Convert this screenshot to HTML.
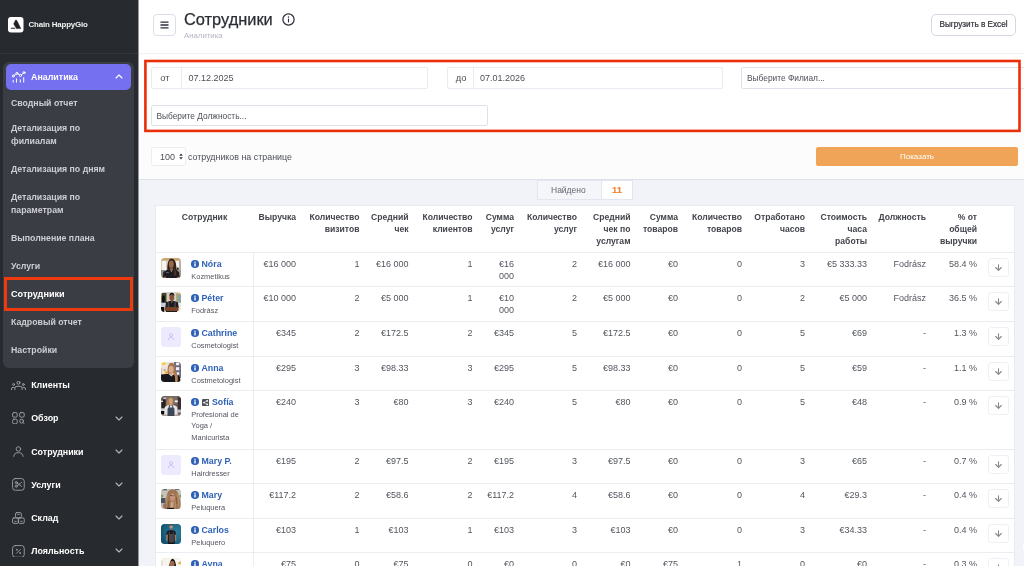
<!DOCTYPE html>
<html><head><meta charset="utf-8"><style>
*{box-sizing:border-box;margin:0;padding:0}
svg{display:block}
html,body{width:1024px;height:566px;overflow:hidden;background:#fff;font-family:"Liberation Sans",sans-serif;color:#3f4254}
#side{will-change:transform;position:absolute;left:0;top:0;width:138px;height:566px;background:#272a2e;color:#fff;overflow:hidden}
#brand{position:absolute;left:0;top:0;width:138px;height:54px;border-bottom:1px solid #33363b}
#logo{position:absolute;left:8.2px;top:17px;width:15.5px;height:15.5px;background:#fff;border-radius:3px}
#bname{position:absolute;left:28.5px;top:19.5px;font-size:7.9px;font-weight:bold;color:#f2f2f2;letter-spacing:-0.15px}
#grp{position:absolute;left:3px;top:62px;width:130.5px;height:305.5px;background:#3a3d44;border-radius:6px}
#pill{position:absolute;left:3px;top:2px;width:125px;height:26px;background:#7470ef;border-radius:5px}
#pill span{position:absolute;left:25px;top:7.5px;font-size:8.9px;font-weight:bold;color:#fff}
.sub{position:absolute;left:8px;font-size:8.75px;font-weight:bold;color:#cdced3;line-height:13px;white-space:nowrap}
.sub.act{color:#fff;font-size:9.1px}
#actbox{position:absolute;left:4px;top:277px;width:129.4px;height:33.6px;border:3px solid #ee3a0c}
.mi{position:absolute;left:31.2px;font-size:8.9px;font-weight:bold;color:#fff;white-space:nowrap}
.ico{position:absolute}
#main{will-change:transform;position:absolute;left:138px;top:0;width:886px;height:566px;background:#f2f3f8;overflow:hidden;border-left:1px solid #95979d}
#main>*{margin-left:-1px}
#hdr{position:absolute;left:0;top:0;width:886px;height:54px;background:#fff;border-bottom:1px solid #f1f1f5}
#ham{position:absolute;left:15px;top:14px;width:23px;height:22px;border:1px solid #dcdfe9;border-radius:4px;background:#fff}
#title{position:absolute;left:46px;top:9.5px;font-size:16.4px;color:#2a2d34;-webkit-text-stroke:0.25px #2a2d34;white-space:nowrap}
#crumb{position:absolute;left:46px;top:31px;font-size:7.8px;color:#b5b5c3}
#xl{position:absolute;left:793px;top:13.5px;width:85px;height:22px;border:1px solid #d3d7e3;border-radius:5px;background:#fff;font-size:8.2px;color:#2f3137;-webkit-text-stroke:0.2px #2f3137;text-align:center;line-height:20px}
#filt{position:absolute;left:0;top:54px;width:886px;height:126px;background:linear-gradient(#fff 0,#fff 79px,#fcfcfd 79px);border-bottom:1px solid #dfe1e8}
#red{position:absolute;left:6px;top:6px;width:876px;height:73px;border:3px solid #ea2e08}
.inp{position:absolute;height:21.6px;border:1px solid #e8ebf2;border-radius:2px;background:#fff;font-size:9px;color:#4d5058;line-height:21px;white-space:nowrap}
.add{position:absolute;top:0;left:0;height:19.6px;border-right:1px solid #e8ebf2;text-align:left;padding-left:7.8px;font-size:9.3px}
#show{position:absolute;left:678px;top:93px;width:202px;height:19px;background:#f0a458;border-radius:2px;color:#fff;font-size:8px;text-align:center;line-height:19px}
#found{position:absolute;left:399px;top:180px;width:96px;height:20px;border:1px solid #e4e6ef;background:#f5f6fa;font-size:8.5px;line-height:18px;color:#63666f}
#found b{position:absolute;left:63px;top:0;width:31px;height:18px;background:#fff;border-left:1px solid #e4e6ef;text-align:center;color:#f08a3c;font-size:9.3px;font-weight:bold;-webkit-text-stroke:0.2px #f08a3c}
#tbl{position:absolute;left:17px;top:205px;width:860px;height:400px;background:#fff;border:1px solid #e9ebf1}
.row{position:absolute;left:0;width:858px;border-top:1px solid #ebedf3}
.c{position:absolute;text-align:right;font-size:9px;line-height:11.6px;color:#53565f;white-space:nowrap}
.h{position:absolute;text-align:right;font-size:8.6px;line-height:11.9px;font-weight:bold;color:#43454d;white-space:nowrap}
.vl{position:absolute;left:97px;width:1px;background:#ebedf3}
.nm{position:absolute;left:45.5px;font-size:8.8px;font-weight:bold;color:#2f62b5;white-space:nowrap}
.rl{position:absolute;left:35.3px;font-size:7.45px;line-height:11.7px;color:#53565f;white-space:nowrap}
.av{position:absolute;left:5px;width:20px;height:20px;border-radius:3.5px;overflow:hidden}
.btn{position:absolute;left:832px;width:21px;height:19px;border:1px solid #eef0f4;border-radius:3px;background:#fff}
.inf{position:absolute;left:35.3px;width:7.5px;height:7.5px;border-radius:50%;background:#2f62b5}
</style></head><body>
<div id="side">
 <div id="brand"><div id="logo" style="background:none"><svg width="15.5" height="15.5" viewBox="0 0 15.5 15.5" ><rect width="15.5" height="15.5" rx="3" fill="#fff"/><path d="M7.6 3 L8.7 3.3 L12.8 11.6 L8.5 11.6 L5.7 6.9Z" fill="#202126" stroke="#202126" stroke-width="0.5" stroke-linejoin="round"/><rect x="2.8" y="10.8" width="4.4" height="0.9" rx="0.3" fill="#202126"/></svg></div><div id="bname">Chain HappyGio</div></div>
 <div id="grp">
  <div id="pill"><div class="ico" style="left:6px;top:7px"><svg width="14" height="12" viewBox="0 0 14 12" ><g stroke="#fff" stroke-width="1" fill="none" stroke-linecap="round"><path d="M1.2 9.3 V11.2 M4.5 7.9 V11.2 M8.3 8.8 V11.2 M11.7 6.6 V11.2"/><circle cx="1.3" cy="5" r="1.05"/><circle cx="4.9" cy="2.4" r="1.05"/><circle cx="8.5" cy="4.5" r="1.05"/><circle cx="12" cy="1.7" r="1.05"/><path d="M2.2 4.4 L4 3.1 M5.9 2.9 L7.6 3.9 M9.3 3.8 L11.2 2.3" stroke-width="0.9"/></g></svg></div><span>Аналитика</span><div class="ico" style="left:109px;top:10px"><svg width="8" height="5" viewBox="0 0 8 5" ><path d="M1 4 L4 1 L7 4" fill="none" stroke="#fff" stroke-width="1.1" stroke-linecap="round" stroke-linejoin="round"/></svg></div></div>
  <div class="sub" style="top:34.5px">Сводный отчет</div><div class="sub" style="top:60px">Детализация по<br>филиалам</div><div class="sub" style="top:101px">Детализация по дням</div><div class="sub" style="top:128.5px">Детализация по<br>параметрам</div><div class="sub" style="top:170px">Выполнение плана</div><div class="sub" style="top:198px">Услуги</div><div class="sub act" style="top:225.7px">Сотрудники</div><div class="sub" style="top:254px">Кадровый отчет</div><div class="sub" style="top:282px">Настройки</div>
 </div>
 <div id="actbox"></div>
 <div class="ico" style="left:11px;top:381px"><svg width="15" height="9.6" viewBox="0 0 15 9.6" ><g stroke="#a4a6ad" stroke-width="0.95" fill="none" stroke-linecap="round" stroke-linejoin="round"><circle cx="7.5" cy="1.7" r="1.5"/><path d="M3.9 8.6 V7.3 Q3.9 5.3 5.9 5.3 H9.1 Q11.1 5.3 11.1 7.3 V8.6"/><circle cx="2.6" cy="3.5" r="0.95"/><path d="M0.5 8.6 V8 Q0.5 6.4 2.1 6.4 H3.1"/><circle cx="12.4" cy="3.5" r="0.95"/><path d="M14.5 8.6 V8 Q14.5 6.4 12.9 6.4 H11.9"/></g></svg></div><div class="mi" style="top:380px">Клиенты</div><div class="ico" style="left:12px;top:412px"><svg width="13.4" height="12.4" viewBox="0 0 14 13" ><g stroke="#a4a6ad" stroke-width="0.95" fill="none" stroke-linecap="round" stroke-linejoin="round"><rect x="0.6" y="0.6" width="4.8" height="4.8" rx="1.4"/><rect x="8" y="0.6" width="4.8" height="4.8" rx="1.4"/><rect x="0.6" y="7.6" width="4.8" height="4.8" rx="1.4"/><circle cx="10" cy="9.6" r="2"/><path d="M11.6 11.2 L13 12.5"/></g></svg></div><div class="mi" style="top:413.3px">Обзор</div><div class="ico" style="left:115px;top:415.8px"><svg width="8" height="5" viewBox="0 0 8 5" ><path d="M1 1 L4 4 L7 1" fill="none" stroke="#b4b6bd" stroke-width="1.1" stroke-linecap="round" stroke-linejoin="round"/></svg></div><div class="ico" style="left:13.2px;top:445.8px"><svg width="10.8" height="11" viewBox="0 0 12 12" ><g stroke="#a4a6ad" stroke-width="0.95" fill="none" stroke-linecap="round" stroke-linejoin="round"><circle cx="6" cy="3.2" r="2.5"/><path d="M0.8 11.5 Q1 7.3 6 7.3 Q11 7.3 11.2 11.5"/></g></svg></div><div class="mi" style="top:446.5px">Сотрудники</div><div class="ico" style="left:115px;top:449.0px"><svg width="8" height="5" viewBox="0 0 8 5" ><path d="M1 1 L4 4 L7 1" fill="none" stroke="#b4b6bd" stroke-width="1.1" stroke-linecap="round" stroke-linejoin="round"/></svg></div><div class="ico" style="left:12px;top:478.3px"><svg width="12.8" height="12.8" viewBox="0 0 14 14" ><g stroke="#a4a6ad" stroke-width="0.95" fill="none" stroke-linecap="round" stroke-linejoin="round"><rect x="0.6" y="0.6" width="12.8" height="12.8" rx="3"/><circle cx="4.7" cy="5" r="1.2"/><circle cx="4.7" cy="9" r="1.2"/><path d="M5.7 5.6 L10.5 9.2 M5.7 8.4 L10.5 4.8"/></g></svg></div><div class="mi" style="top:479.5px">Услуги</div><div class="ico" style="left:115px;top:482.0px"><svg width="8" height="5" viewBox="0 0 8 5" ><path d="M1 1 L4 4 L7 1" fill="none" stroke="#b4b6bd" stroke-width="1.1" stroke-linecap="round" stroke-linejoin="round"/></svg></div><div class="ico" style="left:12px;top:511.5px"><svg width="12.8" height="12" viewBox="0 0 14 13" ><g stroke="#a4a6ad" stroke-width="0.95" fill="none" stroke-linecap="round" stroke-linejoin="round"><rect x="3.8" y="0.6" width="6.4" height="5.8" rx="1.4"/><rect x="0.6" y="6.4" width="6.4" height="6" rx="1.4"/><rect x="7" y="6.4" width="6.4" height="6" rx="1.4"/><path d="M6.2 2.6 H7.8 M3 10.2 H4.6 M9.4 10.2 H11"/></g></svg></div><div class="mi" style="top:512.5px">Склад</div><div class="ico" style="left:115px;top:515.0px"><svg width="8" height="5" viewBox="0 0 8 5" ><path d="M1 1 L4 4 L7 1" fill="none" stroke="#b4b6bd" stroke-width="1.1" stroke-linecap="round" stroke-linejoin="round"/></svg></div><div class="ico" style="left:12px;top:544.5px"><svg width="12.8" height="12.8" viewBox="0 0 14 14" ><g stroke="#a4a6ad" stroke-width="0.95" fill="none" stroke-linecap="round" stroke-linejoin="round"><rect x="0.6" y="0.6" width="12.8" height="12.8" rx="3"/><path d="M5 9 L9 5"/><circle cx="5.2" cy="5.2" r="0.5"/><circle cx="8.8" cy="8.8" r="0.5"/></g></svg></div><div class="mi" style="top:545.5px">Лояльность</div><div class="ico" style="left:115px;top:548.0px"><svg width="8" height="5" viewBox="0 0 8 5" ><path d="M1 1 L4 4 L7 1" fill="none" stroke="#b4b6bd" stroke-width="1.1" stroke-linecap="round" stroke-linejoin="round"/></svg></div>
</div>
<div id="main">
 <div id="hdr">
  <div id="ham"><div class="ico" style="left:6px;top:6px"><svg width="9" height="8" viewBox="0 0 9 8" ><path d="M0.5 1.2 H8.5 M0.5 4 H8.5 M0.5 6.8 H8.5" stroke="#2b2e3b" stroke-width="1.3"/></svg></div></div>
  <div id="title">Сотрудники</div>
  <div class="ico" style="left:144px;top:12.8px"><svg width="13" height="13" viewBox="0 0 13 13" ><circle cx="6.5" cy="6.5" r="5.6" fill="none" stroke="#2b2e3b" stroke-width="1.25"/><circle cx="6.5" cy="4" r="0.75" fill="#2b2e3b"/><rect x="5.95" y="5.6" width="1.1" height="3.8" fill="#2b2e3b"/></svg></div>
  <div id="crumb">Аналитика</div>
  <div id="xl">Выгрузить в Excel</div>
 </div>
 <div id="filt">
  <div class="inp" style="left:13.4px;top:13.2px;width:276.6px"><div class="add" style="width:30px">от</div><span style="margin-left:36px">07.12.2025</span></div>
  <div class="inp" style="left:309px;top:13px;width:276px"><div class="add" style="width:26px">до</div><span style="margin-left:32px">07.01.2026</span></div>
  <div class="inp" style="left:603px;top:13.2px;width:300px;font-size:8.35px;padding-left:5px;border-color:#dde2ea">Выберите Филиал...</div>
  <div class="inp" style="left:13.4px;top:51.3px;width:336.6px;height:21px;font-size:8.35px;padding-left:4px;border-color:#dde2ea">Выберите Должность...</div>
  <div class="inp" style="left:13.4px;top:93.3px;width:34.4px;height:19px;line-height:18.6px;padding-left:7.6px;border-color:#eceef3">100<svg width="4" height="7" viewBox="0 0 4 7" style="position:absolute;left:26.6px;top:5.2px"><path d="M0.2 2.8 L2 0.4 L3.8 2.8Z M0.2 4.2 L2 6.6 L3.8 4.2Z" fill="#33363d"/></svg></div>
  <div style="position:absolute;left:50px;top:97.5px;font-size:8.9px;white-space:nowrap;color:#4d5058">сотрудников на странице</div>
  <div id="show">Показать</div>
  <svg width="886" height="90" style="position:absolute;left:0;top:0"><rect x="7.4" y="7.0" width="874.1" height="69.9" fill="none" stroke="#ea2e08" stroke-width="2.6"/></svg>
 </div>
 <div id="found"><span style="margin-left:13px">Найдено</span><b>11</b></div>
 <div id="tbl"><div class="h" style="left:0;width:97px;top:6.1px;text-align:center">Сотрудник</div>
<div class="h" style="right:718.0px;top:6.1px">Выручка</div>
<div class="h" style="right:654.5px;top:6.1px">Количество<br>визитов</div>
<div class="h" style="right:605.5px;top:6.1px">Средний<br>чек</div>
<div class="h" style="right:541.5px;top:6.1px">Количество<br>клиентов</div>
<div class="h" style="right:500.0px;top:6.1px">Сумма<br>услуг</div>
<div class="h" style="right:437.0px;top:6.1px">Количество<br>услуг</div>
<div class="h" style="right:383.5px;top:6.1px">Средний<br>чек по<br>услугам</div>
<div class="h" style="right:336.0px;top:6.1px">Сумма<br>товаров</div>
<div class="h" style="right:272.0px;top:6.1px">Количество<br>товаров</div>
<div class="h" style="right:209.0px;top:6.1px">Отработано<br>часов</div>
<div class="h" style="right:147.0px;top:6.1px">Стоимость<br>часа<br>работы</div>
<div class="h" style="right:88.0px;top:6.1px">Должность</div>
<div class="h" style="right:37.0px;top:6.1px">% от<br>общей<br>выручки</div>
<div class="row" style="top:46px;height:34px"><div class="vl" style="top:0;height:34px"></div><div class="av" style="top:5px"><svg width="20" height="20" viewBox="0 0 20 20" ><defs><filter id="b1" x="-15%" y="-15%" width="130%" height="130%"><feGaussianBlur stdDeviation="0.65"/></filter></defs><g filter="url(#b1)"><rect x="-2" y="-2" width="24" height="24" fill="#d8cdbf"/><rect x="-2" y="-2" width="24" height="4.5" fill="#c7a673"/><rect x="1" y="3" width="4" height="9.5" fill="#f7f3ed"/><rect x="14.5" y="3" width="4" height="7.5" fill="#f3efe9"/><rect x="18" y="3" width="4" height="10" fill="#b9b2a8"/><ellipse cx="16.8" cy="10.8" rx="1" ry="1.6" fill="#3a302c"/><rect x="-2" y="12" width="6" height="10" fill="#8d8983"/><rect x="16" y="12" width="6" height="10" fill="#9a958e"/><path d="M6.3 13 Q5.8 1 10.4 0.4 Q15 1 15.2 8 Q16.4 13 15.6 17 L12 17 L12 11 L7 12Z" fill="#33241d"/><ellipse cx="10.3" cy="6.2" rx="2.4" ry="3.6" fill="#9a694b"/><rect x="9.2" y="9" width="2.4" height="4" fill="#8c5c40"/><path d="M1.6 20.5 L2.4 14 Q5 12 8.6 11.3 L10.4 14 L12.2 11.3 Q15.6 12 18 14 L18.8 20.5Z" fill="#1b1c23"/><path d="M12.6 10 Q16 13 15.4 17.5 L13.2 17.5 Q13.6 13 12.6 10Z" fill="#4e362a"/><rect x="5" y="14" width="3" height="0.8" fill="#6d6e76"/><rect x="2.5" y="18.8" width="2.6" height="2" fill="#a8623c"/><rect x="15.8" y="18.8" width="2.4" height="2" fill="#a8623c"/></g></svg></div><div class="inf" style="top:7.3px"><svg width="8" height="8" viewBox="0 0 8 8" style="position:absolute;left:0;top:0"><circle cx="4" cy="2.2" r="0.75" fill="#fff"/><rect x="3.3" y="3.4" width="1.4" height="3" fill="#fff"/></svg></div><div class="nm" style="top:6px">Nóra</div><div class="rl" style="top:17.7px">Kozmetikus</div><div class="c" style="right:718.0px;top:6px">€16 000</div><div class="c" style="right:654.5px;top:6px">1</div><div class="c" style="right:605.5px;top:6px">€16 000</div><div class="c" style="right:541.5px;top:6px">1</div><div class="c" style="right:500.0px;top:6px">€16<br>000</div><div class="c" style="right:437.0px;top:6px">2</div><div class="c" style="right:383.5px;top:6px">€16 000</div><div class="c" style="right:336.0px;top:6px">€0</div><div class="c" style="right:272.0px;top:6px">0</div><div class="c" style="right:209.0px;top:6px">3</div><div class="c" style="right:147.0px;top:6px">€5 333.33</div><div class="c" style="right:88.0px;top:6px">Fodrász</div><div class="c" style="right:37.0px;top:6px">58.4 %</div><div class="btn" style="top:4.5px"><div style="position:absolute;left:5px;top:4px;width:9px;height:9px"><svg width="9" height="9" viewBox="0 0 9 9" ><path d="M4.5 1.8 V7.2 M1.7 4.5 L4.5 7.3 L7.3 4.5" fill="none" stroke="#85878e" stroke-width="1.1" stroke-linecap="round" stroke-linejoin="round"/></svg></div></div></div>
<div class="row" style="top:80px;height:35px"><div class="vl" style="top:0;height:35px"></div><div class="av" style="top:5px"><svg width="20" height="20" viewBox="0 0 20 20" ><defs><filter id="b2" x="-15%" y="-15%" width="130%" height="130%"><feGaussianBlur stdDeviation="0.65"/></filter></defs><g filter="url(#b2)"><rect x="-2" y="-2" width="24" height="24" fill="#d6d0c8"/><rect x="0.3" y="1" width="5.4" height="10" fill="#3a4541"/><rect x="0.2" y="1" width="0.7" height="8" fill="#b08a4f"/><rect x="5.2" y="1" width="0.8" height="8" fill="#b89558"/><ellipse cx="2.4" cy="7" rx="1.5" ry="3.4" fill="#101010"/><rect x="15.5" y="2" width="5" height="8.5" fill="#86a5a5"/><rect x="15.2" y="1.6" width="1.1" height="9" fill="#c8a25e"/><rect x="15.2" y="1.4" width="6" height="1" fill="#c8a25e"/><rect x="-2" y="10.8" width="6" height="4.4" fill="#c9cdd9"/><rect x="-2" y="15" width="5.2" height="7" fill="#0d0d0e"/><rect x="16.5" y="11" width="5" height="10" fill="#efe9e2"/><ellipse cx="10.8" cy="5.6" rx="2.4" ry="3.3" fill="#875436"/><path d="M8.3 4.2 Q8.4 0.8 10.8 0.8 Q13.3 0.8 13.4 4.2 Q12.6 2.6 10.8 2.6 Q9 2.6 8.3 4.2Z" fill="#191311"/><rect x="9.8" y="8" width="2" height="3" fill="#7a4a2e"/><path d="M4.2 16 L5 10.6 Q7.4 9 9.6 8.7 L10.8 11.4 L12 8.7 Q14.6 9 17 10.6 L17.8 16Z" fill="#1c1c20"/><path d="M6.6 10 L8 9.4 L8.4 15 L6.8 15Z M15 10 L13.6 9.4 L13.2 15 L14.8 15Z" fill="#45454a"/><rect x="3.6" y="15" width="14" height="4.2" rx="2" fill="#7a4528"/><rect x="5" y="19" width="11" height="2" fill="#1c1c20"/></g></svg></div><div class="inf" style="top:7.3px"><svg width="8" height="8" viewBox="0 0 8 8" style="position:absolute;left:0;top:0"><circle cx="4" cy="2.2" r="0.75" fill="#fff"/><rect x="3.3" y="3.4" width="1.4" height="3" fill="#fff"/></svg></div><div class="nm" style="top:6px">Péter</div><div class="rl" style="top:17.7px">Fodrász</div><div class="c" style="right:718.0px;top:6px">€10 000</div><div class="c" style="right:654.5px;top:6px">2</div><div class="c" style="right:605.5px;top:6px">€5 000</div><div class="c" style="right:541.5px;top:6px">1</div><div class="c" style="right:500.0px;top:6px">€10<br>000</div><div class="c" style="right:437.0px;top:6px">2</div><div class="c" style="right:383.5px;top:6px">€5 000</div><div class="c" style="right:336.0px;top:6px">€0</div><div class="c" style="right:272.0px;top:6px">0</div><div class="c" style="right:209.0px;top:6px">2</div><div class="c" style="right:147.0px;top:6px">€5 000</div><div class="c" style="right:88.0px;top:6px">Fodrász</div><div class="c" style="right:37.0px;top:6px">36.5 %</div><div class="btn" style="top:4.5px"><div style="position:absolute;left:5px;top:4px;width:9px;height:9px"><svg width="9" height="9" viewBox="0 0 9 9" ><path d="M4.5 1.8 V7.2 M1.7 4.5 L4.5 7.3 L7.3 4.5" fill="none" stroke="#85878e" stroke-width="1.1" stroke-linecap="round" stroke-linejoin="round"/></svg></div></div></div>
<div class="row" style="top:115px;height:35px"><div class="vl" style="top:0;height:35px"></div><div class="av" style="top:5px"><svg width="20" height="20" viewBox="0 0 20 20" ><rect width="20" height="20" fill="#eceafc"/><circle cx="10" cy="8.1" r="1.5" fill="none" stroke="#c4bff7" stroke-width="0.9"/><path d="M7.3 12.9 Q7.6 10.3 10 10.3 Q12.4 10.3 12.7 12.9" fill="none" stroke="#c4bff7" stroke-width="0.9" stroke-linecap="round"/></svg></div><div class="inf" style="top:7.3px"><svg width="8" height="8" viewBox="0 0 8 8" style="position:absolute;left:0;top:0"><circle cx="4" cy="2.2" r="0.75" fill="#fff"/><rect x="3.3" y="3.4" width="1.4" height="3" fill="#fff"/></svg></div><div class="nm" style="top:6px">Cathrine</div><div class="rl" style="top:17.7px">Cosmetologist</div><div class="c" style="right:718.0px;top:6px">€345</div><div class="c" style="right:654.5px;top:6px">2</div><div class="c" style="right:605.5px;top:6px">€172.5</div><div class="c" style="right:541.5px;top:6px">2</div><div class="c" style="right:500.0px;top:6px">€345</div><div class="c" style="right:437.0px;top:6px">5</div><div class="c" style="right:383.5px;top:6px">€172.5</div><div class="c" style="right:336.0px;top:6px">€0</div><div class="c" style="right:272.0px;top:6px">0</div><div class="c" style="right:209.0px;top:6px">5</div><div class="c" style="right:147.0px;top:6px">€69</div><div class="c" style="right:88.0px;top:6px">-</div><div class="c" style="right:37.0px;top:6px">1.3 %</div><div class="btn" style="top:4.5px"><div style="position:absolute;left:5px;top:4px;width:9px;height:9px"><svg width="9" height="9" viewBox="0 0 9 9" ><path d="M4.5 1.8 V7.2 M1.7 4.5 L4.5 7.3 L7.3 4.5" fill="none" stroke="#85878e" stroke-width="1.1" stroke-linecap="round" stroke-linejoin="round"/></svg></div></div></div>
<div class="row" style="top:150px;height:34px"><div class="vl" style="top:0;height:34px"></div><div class="av" style="top:5px"><svg width="20" height="20" viewBox="0 0 20 20" ><defs><filter id="b3" x="-15%" y="-15%" width="130%" height="130%"><feGaussianBlur stdDeviation="0.65"/></filter></defs><g filter="url(#b3)"><rect x="-2" y="-2" width="24" height="24" fill="#efe2d8"/><ellipse cx="2.6" cy="1.6" rx="2.2" ry="1.5" fill="#f2d145"/><ellipse cx="5.4" cy="10.6" rx="1.9" ry="1.7" fill="#e8b648"/><ellipse cx="3.6" cy="8" rx="1" ry="0.8" fill="#7d8c4c"/><rect x="-2" y="6" width="2.6" height="6" fill="#c9a08c"/><rect x="13" y="-2" width="9" height="18" fill="#716e82"/><rect x="15" y="0.6" width="3.2" height="2.6" fill="#f5f3f6"/><rect x="15" y="5.2" width="3.2" height="3" fill="#f5f3f6"/><rect x="15.4" y="10.2" width="2.8" height="2.6" fill="#f0eef2"/><path d="M6.6 11 Q6 1.2 10.4 0.8 Q14.6 1.2 14.4 8 Q16.4 11 17 20.5 L13.4 20.5 L12.6 11 L7.4 12Z" fill="#a6774e"/><ellipse cx="10.1" cy="7.4" rx="2.5" ry="3.6" fill="#dbab90"/><rect x="9.2" y="10.4" width="2.2" height="3" fill="#d0a084"/><path d="M-1 20.5 L-0.4 12.6 Q4 11.6 7.6 12 L10.4 14.4 L12.4 12.4 L14.2 13 L15 20.5Z" fill="#14151b"/><path d="M17 13 Q19.4 14 19.6 20.5 L16.4 20.5Z" fill="#14151b"/><path d="M13.4 10.4 Q16.6 13.6 16.4 20.5 L14.2 20.5 Q14.8 15 12.8 11.6Z" fill="#b8864f"/></g></svg></div><div class="inf" style="top:7.3px"><svg width="8" height="8" viewBox="0 0 8 8" style="position:absolute;left:0;top:0"><circle cx="4" cy="2.2" r="0.75" fill="#fff"/><rect x="3.3" y="3.4" width="1.4" height="3" fill="#fff"/></svg></div><div class="nm" style="top:6px">Anna</div><div class="rl" style="top:17.7px">Costmetologist</div><div class="c" style="right:718.0px;top:6px">€295</div><div class="c" style="right:654.5px;top:6px">3</div><div class="c" style="right:605.5px;top:6px">€98.33</div><div class="c" style="right:541.5px;top:6px">3</div><div class="c" style="right:500.0px;top:6px">€295</div><div class="c" style="right:437.0px;top:6px">5</div><div class="c" style="right:383.5px;top:6px">€98.33</div><div class="c" style="right:336.0px;top:6px">€0</div><div class="c" style="right:272.0px;top:6px">0</div><div class="c" style="right:209.0px;top:6px">5</div><div class="c" style="right:147.0px;top:6px">€59</div><div class="c" style="right:88.0px;top:6px">-</div><div class="c" style="right:37.0px;top:6px">1.1 %</div><div class="btn" style="top:4.5px"><div style="position:absolute;left:5px;top:4px;width:9px;height:9px"><svg width="9" height="9" viewBox="0 0 9 9" ><path d="M4.5 1.8 V7.2 M1.7 4.5 L4.5 7.3 L7.3 4.5" fill="none" stroke="#85878e" stroke-width="1.1" stroke-linecap="round" stroke-linejoin="round"/></svg></div></div></div>
<div class="row" style="top:184px;height:59px"><div class="vl" style="top:0;height:59px"></div><div class="av" style="top:5px"><svg width="20" height="20" viewBox="0 0 20 20" ><defs><filter id="b4" x="-15%" y="-15%" width="130%" height="130%"><feGaussianBlur stdDeviation="0.65"/></filter></defs><g filter="url(#b4)"><rect x="-2" y="-2" width="24" height="24" fill="#635757"/><rect x="0.8" y="3.6" width="3.8" height="8.6" fill="#2a2424"/><rect x="17" y="1.6" width="4" height="12.4" fill="#3a2f30"/><rect x="5" y="0" width="11" height="8" fill="#7a6c66"/><rect x="13.8" y="4.4" width="3" height="1.8" fill="#f6f4f4"/><rect x="2.4" y="1.4" width="2.8" height="1.6" fill="#cfc6c6"/><rect x="-1" y="4.6" width="3" height="1.4" fill="#e2dede"/><rect x="-2" y="12.4" width="6" height="2.8" fill="#cfccd0"/><rect x="16.4" y="13.6" width="5" height="3" fill="#c4c0c4"/><rect x="-2" y="15" width="5" height="3.4" fill="#0e0e10"/><rect x="-2" y="18.4" width="24" height="3" fill="#8a8486"/><path d="M5.4 11.6 Q4.8 2 9.4 1.4 Q12.8 1.8 12.4 8 L12 11Z" fill="#b0804f"/><ellipse cx="9.9" cy="5" rx="1.9" ry="3" fill="#cf9f80"/><rect x="9" y="7.6" width="1.8" height="2.4" fill="#c89878"/><path d="M3.2 19.4 L3.8 11 Q6 9 8.4 8.8 L10 10.4 L11.6 8.8 Q14 9 16.2 11 L16.8 19.4Z" fill="#e5e3eb"/><path d="M6.4 20.5 L6.6 12.6 L7.6 11.4 L8 9 L8.8 9 L8.8 11.4 L11.2 11.4 L11.2 9 L12 9 L12.4 11.4 L13.4 12.6 L13.6 20.5Z" fill="#3c4757"/><rect x="4" y="18.4" width="1.6" height="2" fill="#c8977a"/><rect x="14.6" y="18.4" width="1.6" height="2" fill="#c8977a"/></g></svg></div><div class="inf" style="top:7.3px"><svg width="8" height="8" viewBox="0 0 8 8" style="position:absolute;left:0;top:0"><circle cx="4" cy="2.2" r="0.75" fill="#fff"/><rect x="3.3" y="3.4" width="1.4" height="3" fill="#fff"/></svg></div><div style="position:absolute;left:46.2px;top:7.5px;width:8px;height:8px"><svg width="7.2" height="7.2" viewBox="0 0 8 8" ><rect width="8" height="8" rx="1" fill="#50535a"/><circle cx="2.3" cy="4" r="1" fill="#fff"/><circle cx="5.7" cy="2.1" r="1" fill="#fff"/><circle cx="5.7" cy="5.9" r="1" fill="#fff"/><path d="M2.3 4 L5.7 2.1 M2.3 4 L5.7 5.9" stroke="#fff" stroke-width="0.6"/></svg></div><div class="nm" style="left:56px;top:6px">Sofía</div><div class="rl" style="top:17.7px">Profesional de<br>Yoga /<br>Manicurista</div><div class="c" style="right:718.0px;top:6px">€240</div><div class="c" style="right:654.5px;top:6px">3</div><div class="c" style="right:605.5px;top:6px">€80</div><div class="c" style="right:541.5px;top:6px">3</div><div class="c" style="right:500.0px;top:6px">€240</div><div class="c" style="right:437.0px;top:6px">5</div><div class="c" style="right:383.5px;top:6px">€80</div><div class="c" style="right:336.0px;top:6px">€0</div><div class="c" style="right:272.0px;top:6px">0</div><div class="c" style="right:209.0px;top:6px">5</div><div class="c" style="right:147.0px;top:6px">€48</div><div class="c" style="right:88.0px;top:6px">-</div><div class="c" style="right:37.0px;top:6px">0.9 %</div><div class="btn" style="top:4.5px"><div style="position:absolute;left:5px;top:4px;width:9px;height:9px"><svg width="9" height="9" viewBox="0 0 9 9" ><path d="M4.5 1.8 V7.2 M1.7 4.5 L4.5 7.3 L7.3 4.5" fill="none" stroke="#85878e" stroke-width="1.1" stroke-linecap="round" stroke-linejoin="round"/></svg></div></div></div>
<div class="row" style="top:243px;height:34px"><div class="vl" style="top:0;height:34px"></div><div class="av" style="top:5px"><svg width="20" height="20" viewBox="0 0 20 20" ><rect width="20" height="20" fill="#eceafc"/><circle cx="10" cy="8.1" r="1.5" fill="none" stroke="#c4bff7" stroke-width="0.9"/><path d="M7.3 12.9 Q7.6 10.3 10 10.3 Q12.4 10.3 12.7 12.9" fill="none" stroke="#c4bff7" stroke-width="0.9" stroke-linecap="round"/></svg></div><div class="inf" style="top:7.3px"><svg width="8" height="8" viewBox="0 0 8 8" style="position:absolute;left:0;top:0"><circle cx="4" cy="2.2" r="0.75" fill="#fff"/><rect x="3.3" y="3.4" width="1.4" height="3" fill="#fff"/></svg></div><div class="nm" style="top:6px">Mary P.</div><div class="rl" style="top:17.7px">Hairdresser</div><div class="c" style="right:718.0px;top:6px">€195</div><div class="c" style="right:654.5px;top:6px">2</div><div class="c" style="right:605.5px;top:6px">€97.5</div><div class="c" style="right:541.5px;top:6px">2</div><div class="c" style="right:500.0px;top:6px">€195</div><div class="c" style="right:437.0px;top:6px">3</div><div class="c" style="right:383.5px;top:6px">€97.5</div><div class="c" style="right:336.0px;top:6px">€0</div><div class="c" style="right:272.0px;top:6px">0</div><div class="c" style="right:209.0px;top:6px">3</div><div class="c" style="right:147.0px;top:6px">€65</div><div class="c" style="right:88.0px;top:6px">-</div><div class="c" style="right:37.0px;top:6px">0.7 %</div><div class="btn" style="top:4.5px"><div style="position:absolute;left:5px;top:4px;width:9px;height:9px"><svg width="9" height="9" viewBox="0 0 9 9" ><path d="M4.5 1.8 V7.2 M1.7 4.5 L4.5 7.3 L7.3 4.5" fill="none" stroke="#85878e" stroke-width="1.1" stroke-linecap="round" stroke-linejoin="round"/></svg></div></div></div>
<div class="row" style="top:277px;height:35px"><div class="vl" style="top:0;height:35px"></div><div class="av" style="top:5px"><svg width="20" height="20" viewBox="0 0 20 20" ><defs><filter id="b5" x="-15%" y="-15%" width="130%" height="130%"><feGaussianBlur stdDeviation="0.65"/></filter></defs><g filter="url(#b5)"><rect x="-2" y="-2" width="24" height="24" fill="#c6c3bb"/><rect x="-2" y="-2" width="8" height="3.4" fill="#6a6a66"/><rect x="14" y="-2" width="8" height="3" fill="#6e6e6a"/><ellipse cx="1" cy="7" rx="1.2" ry="1.6" fill="#7c9a5a"/><ellipse cx="19.4" cy="7" rx="1" ry="1.6" fill="#7c9a5a"/><rect x="-1" y="9" width="5.4" height="5.4" fill="#4a5560"/><rect x="-1" y="14.2" width="4" height="7" fill="#b8b4ae"/><path d="M3.6 20.5 Q3.4 12 5.6 7 Q6.4 0.6 11.4 0.2 Q16.6 0.4 17.6 6 Q20 12 19.2 20.5Z" fill="#9f7654"/><path d="M5.4 16 Q5 10 7 6 M16.2 5 Q18.2 11 17.6 18 M13.8 12 Q15 15 14.2 19" stroke="#b98d66" stroke-width="1.3" fill="none"/><path d="M7.6 12 Q7 15 7.8 18 M15.4 8 Q16 12 15.6 15" stroke="#7e5a3e" stroke-width="0.9" fill="none"/><ellipse cx="11.5" cy="8.2" rx="2.4" ry="3.8" fill="#c99880"/><ellipse cx="10.2" cy="6.6" rx="1.2" ry="0.6" fill="#5a3a30"/><ellipse cx="12.8" cy="6.8" rx="0.9" ry="0.5" fill="#6a463a"/><ellipse cx="11.6" cy="10.2" rx="0.8" ry="0.4" fill="#a8605a"/><path d="M9.2 19.4 L9.8 13 L12.4 12.6 L12.6 19.4Z" fill="#caa48c"/><rect x="6" y="18.8" width="7" height="2" fill="#1a1818"/><ellipse cx="4" cy="17" rx="2" ry="2.4" fill="#a0705a"/></g></svg></div><div class="inf" style="top:7.3px"><svg width="8" height="8" viewBox="0 0 8 8" style="position:absolute;left:0;top:0"><circle cx="4" cy="2.2" r="0.75" fill="#fff"/><rect x="3.3" y="3.4" width="1.4" height="3" fill="#fff"/></svg></div><div class="nm" style="top:6px">Mary</div><div class="rl" style="top:17.7px">Peluquera</div><div class="c" style="right:718.0px;top:6px">€117.2</div><div class="c" style="right:654.5px;top:6px">2</div><div class="c" style="right:605.5px;top:6px">€58.6</div><div class="c" style="right:541.5px;top:6px">2</div><div class="c" style="right:500.0px;top:6px">€117.2</div><div class="c" style="right:437.0px;top:6px">4</div><div class="c" style="right:383.5px;top:6px">€58.6</div><div class="c" style="right:336.0px;top:6px">€0</div><div class="c" style="right:272.0px;top:6px">0</div><div class="c" style="right:209.0px;top:6px">4</div><div class="c" style="right:147.0px;top:6px">€29.3</div><div class="c" style="right:88.0px;top:6px">-</div><div class="c" style="right:37.0px;top:6px">0.4 %</div><div class="btn" style="top:4.5px"><div style="position:absolute;left:5px;top:4px;width:9px;height:9px"><svg width="9" height="9" viewBox="0 0 9 9" ><path d="M4.5 1.8 V7.2 M1.7 4.5 L4.5 7.3 L7.3 4.5" fill="none" stroke="#85878e" stroke-width="1.1" stroke-linecap="round" stroke-linejoin="round"/></svg></div></div></div>
<div class="row" style="top:312px;height:34px"><div class="vl" style="top:0;height:34px"></div><div class="av" style="top:5px"><svg width="20" height="20" viewBox="0 0 20 20" ><defs><filter id="b6" x="-15%" y="-15%" width="130%" height="130%"><feGaussianBlur stdDeviation="0.65"/></filter></defs><g filter="url(#b6)"><defs><radialGradient id="g6" cx="0.72" cy="0.42" r="0.75"><stop offset="0" stop-color="#2f7d9c"/><stop offset="0.6" stop-color="#1d6484"/><stop offset="1" stop-color="#134a63"/></radialGradient></defs><rect x="-2" y="-2" width="24" height="24" fill="url(#g6)"/><ellipse cx="10.2" cy="3" rx="1.7" ry="2.4" fill="#c09478"/><path d="M8.5 2.2 Q8.8 0.2 10.2 0.2 Q11.7 0.2 11.9 2.2 Q11.2 1.3 10.2 1.3 Q9.2 1.3 8.5 2.2Z" fill="#3c2e28"/><path d="M8.9 4 Q10.2 6.4 11.5 4 Q10.2 5 8.9 4Z" fill="#5a4034"/><path d="M5.4 10.8 L5.8 7.6 Q7.6 6 10.2 6.2 Q12.8 6 14.6 7.6 L15 10.8 L13.6 10.8 L13.6 19.2 L7 19.2 L7 10.8Z" fill="#1c1e24"/><path d="M7.8 8 L8 18.6 L12.8 18.6 L12.8 8 L11.6 8 L11.4 10 L9.2 10 L9 8Z" fill="#4a4448"/><rect x="9.2" y="7.4" width="2.2" height="2.4" fill="#17181c"/><path d="M5.3 10.8 L5 16.6 L6.3 17 L6.9 10.8Z M15.1 10.8 L15.4 16.6 L14.1 17 L13.7 10.8Z" fill="#a87858"/><rect x="6.8" y="18.6" width="7" height="3" fill="#15161a"/></g></svg></div><div class="inf" style="top:7.3px"><svg width="8" height="8" viewBox="0 0 8 8" style="position:absolute;left:0;top:0"><circle cx="4" cy="2.2" r="0.75" fill="#fff"/><rect x="3.3" y="3.4" width="1.4" height="3" fill="#fff"/></svg></div><div class="nm" style="top:6px">Carlos</div><div class="rl" style="top:17.7px">Peluquero</div><div class="c" style="right:718.0px;top:6px">€103</div><div class="c" style="right:654.5px;top:6px">1</div><div class="c" style="right:605.5px;top:6px">€103</div><div class="c" style="right:541.5px;top:6px">1</div><div class="c" style="right:500.0px;top:6px">€103</div><div class="c" style="right:437.0px;top:6px">3</div><div class="c" style="right:383.5px;top:6px">€103</div><div class="c" style="right:336.0px;top:6px">€0</div><div class="c" style="right:272.0px;top:6px">0</div><div class="c" style="right:209.0px;top:6px">3</div><div class="c" style="right:147.0px;top:6px">€34.33</div><div class="c" style="right:88.0px;top:6px">-</div><div class="c" style="right:37.0px;top:6px">0.4 %</div><div class="btn" style="top:4.5px"><div style="position:absolute;left:5px;top:4px;width:9px;height:9px"><svg width="9" height="9" viewBox="0 0 9 9" ><path d="M4.5 1.8 V7.2 M1.7 4.5 L4.5 7.3 L7.3 4.5" fill="none" stroke="#85878e" stroke-width="1.1" stroke-linecap="round" stroke-linejoin="round"/></svg></div></div></div>
<div class="row" style="top:346px;height:35px"><div class="vl" style="top:0;height:35px"></div><div class="av" style="top:5px"><svg width="20" height="20" viewBox="0 0 20 20" ><defs><filter id="b7" x="-15%" y="-15%" width="130%" height="130%"><feGaussianBlur stdDeviation="0.65"/></filter></defs><g filter="url(#b7)"><rect x="-2" y="-2" width="24" height="24" fill="#f7f4ee"/><rect x="0.4" y="1.6" width="1" height="6" fill="#d8d2bc"/><path d="M16.6 5.4 L19.6 3 L19.8 6.4Z" fill="#e4a04a"/><rect x="-2" y="-2" width="24" height="2.6" fill="#f2ede2"/><path d="M7.6 20.5 Q7.4 1.6 11.6 0.8 Q16 1.6 15.6 20.5Z" fill="#15100e"/><ellipse cx="11.2" cy="6.2" rx="2.3" ry="3.4" fill="#a06848"/></g></svg></div><div class="inf" style="top:7.3px"><svg width="8" height="8" viewBox="0 0 8 8" style="position:absolute;left:0;top:0"><circle cx="4" cy="2.2" r="0.75" fill="#fff"/><rect x="3.3" y="3.4" width="1.4" height="3" fill="#fff"/></svg></div><div class="nm" style="top:6px">Ayna</div><div class="rl" style="top:17.7px"></div><div class="c" style="right:718.0px;top:6px">€75</div><div class="c" style="right:654.5px;top:6px">0</div><div class="c" style="right:605.5px;top:6px">€75</div><div class="c" style="right:541.5px;top:6px">0</div><div class="c" style="right:500.0px;top:6px">€0</div><div class="c" style="right:437.0px;top:6px">0</div><div class="c" style="right:383.5px;top:6px">€0</div><div class="c" style="right:336.0px;top:6px">€75</div><div class="c" style="right:272.0px;top:6px">1</div><div class="c" style="right:209.0px;top:6px">0</div><div class="c" style="right:147.0px;top:6px">€0</div><div class="c" style="right:88.0px;top:6px">-</div><div class="c" style="right:37.0px;top:6px">0.3 %</div><div class="btn" style="top:4.5px"><div style="position:absolute;left:5px;top:4px;width:9px;height:9px"><svg width="9" height="9" viewBox="0 0 9 9" ><path d="M4.5 1.8 V7.2 M1.7 4.5 L4.5 7.3 L7.3 4.5" fill="none" stroke="#85878e" stroke-width="1.1" stroke-linecap="round" stroke-linejoin="round"/></svg></div></div></div></div>
 <div style="position:absolute;left:884.6px;top:537px;width:20px;height:20px;border-radius:50%;background:#fff"></div>
</div>
</body></html>
